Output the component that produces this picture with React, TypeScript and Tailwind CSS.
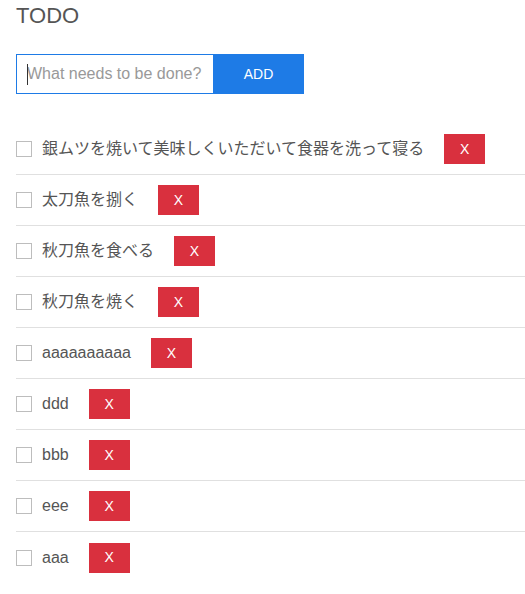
import React from "react";

const items = [
  "銀ムツを焼いて美味しくいただいて食器を洗って寝る",
  "太刀魚を捌く",
  "秋刀魚を食べる",
  "秋刀魚を焼く",
  "aaaaaaaaaa",
  "ddd",
  "bbb",
  "eee",
  "aaa",
];

export default function App() {
  return (
    <div
      className="bg-white w-[525px] h-[594px] overflow-hidden pl-4 text-[#555]"
      style={{ fontFamily: '"Liberation Sans", Arial, "Noto Sans CJK JP", sans-serif' }}
    >
      <h1 className="text-[22px] leading-[22px] pt-[5px] font-normal text-[#555]">TODO</h1>
      <div className="flex mt-[27px] h-[40px]">
        <div className="relative w-[197px] h-full border border-[#1e7be6] border-r-0 flex items-center">
          <span className="absolute left-[10px] top-[9px] w-px h-[21px] bg-[#333]"></span>
          <input
            className="w-full h-full pl-[10px] text-[16px] outline-none placeholder:text-[#999] bg-transparent"
            placeholder="What needs to be done?"
          />
        </div>
        <button className="w-[91px] h-full bg-[#1e7be6] text-white text-[14px]">ADD</button>
      </div>
      <ul className="mt-[30px]">
        {items.map((t, i) => (
          <li
            key={i}
            className="flex items-center h-[51px] border-b border-[#e0e0e0] last:border-b-0"
          >
            <span className="w-4 h-4 border border-[#bdbdbd] bg-white shrink-0"></span>
            <span className="ml-[10px] text-[16px] text-[#555]">{t}</span>
            <button className="ml-[20px] w-[41px] h-[30px] bg-[#d9303e] text-white text-[14px]">X</button>
          </li>
        ))}
      </ul>
    </div>
  );
}
